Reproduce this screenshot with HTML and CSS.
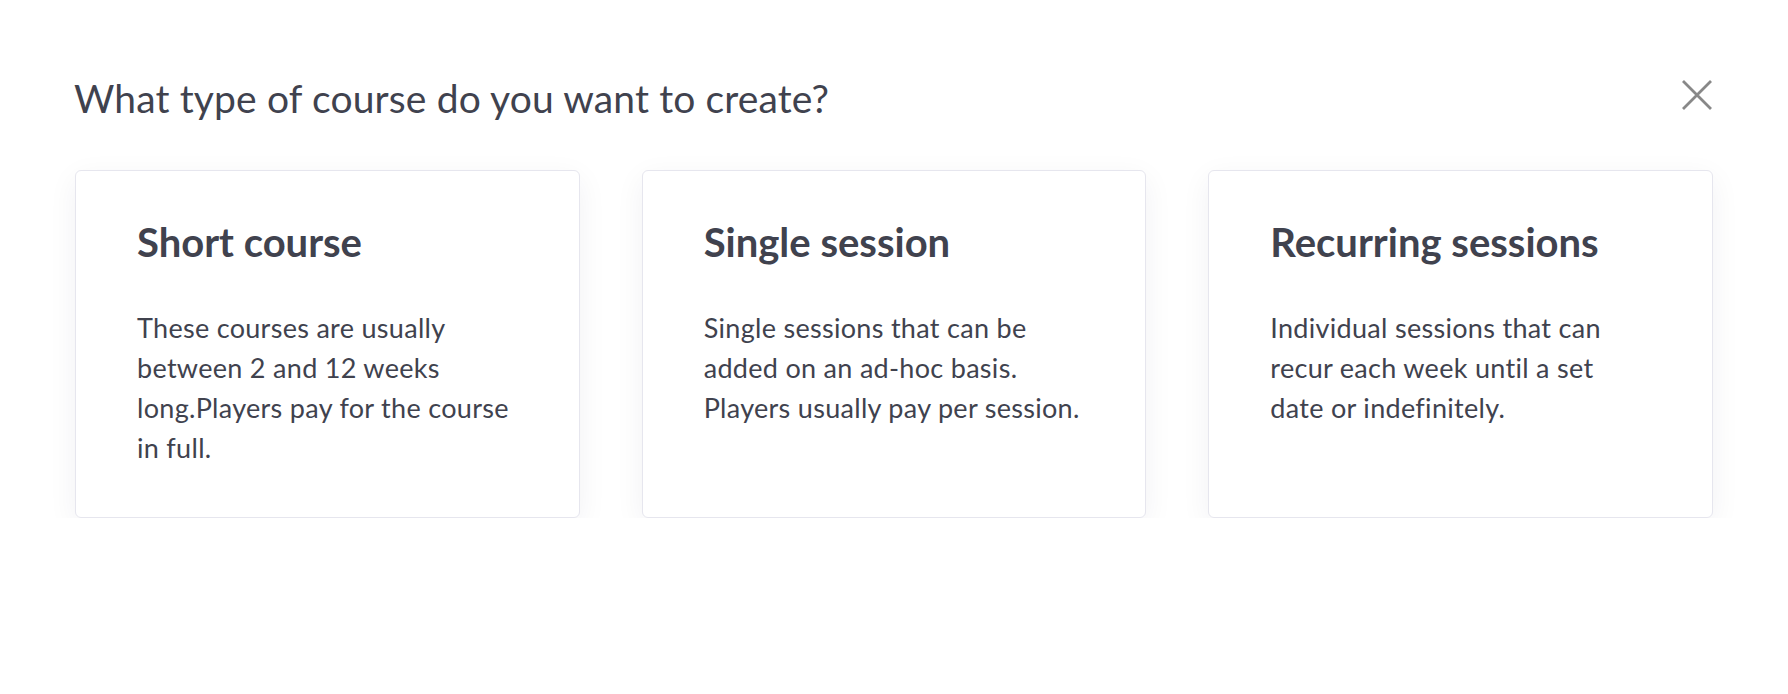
FILE: index.html
```html
<!DOCTYPE html>
<html lang="en">
<head>
<meta charset="utf-8">
<title>Create course</title>
<link rel="stylesheet" href="styles.css">
</head>
<body>
<div class="modal">
  <div class="modal-header">
    <h1 class="modal-title">What type of course do you want to create?</h1>
    <button class="close-btn" aria-label="Close">
      <svg viewBox="0 0 32 32" width="32" height="32"><path d="M2 2 L30 30 M30 2 L2 30" stroke="#888888" stroke-width="2.8" fill="none"/></svg>
    </button>
  </div>
  <div class="options">
    <div class="option-card">
      <h2 class="option-title">Short course</h2>
      <p class="option-desc">These courses are usually between 2 and 12 weeks long.Players pay for the course in full.</p>
    </div>
    <div class="option-card">
      <h2 class="option-title">Single session</h2>
      <p class="option-desc">Single sessions that can be added on an ad-hoc basis. Players usually pay per session.</p>
    </div>
    <div class="option-card">
      <h2 class="option-title">Recurring sessions</h2>
      <p class="option-desc">Individual sessions that can recur each week until a set date or indefinitely.</p>
    </div>
  </div>
</div>
</body>
</html>
```
FILE: styles.css
```css
html, body {
  margin: 0;
  padding: 0;
  background: #ffffff;
}
body {
  font-family: Lato, "Open Sans", sans-serif;
  color: #40424e;
}
.modal {
  padding: 75px 75px 0 74px;
}
.modal-header {
  display: flex;
  justify-content: space-between;
  align-items: center;
}
.modal-title {
  margin: 0;
  font-size: 39px;
  letter-spacing: 0.14px;
  font-weight: 400;
  line-height: 46px;
  color: #40424e;
}
.close-btn {
  border: 0;
  background: transparent;
  padding: 0;
  width: 32px;
  height: 32px;
  margin-top: -6px;
  margin-right: 0;
  cursor: pointer;
  display: flex;
}
.options {
  display: grid;
  grid-template-columns: repeat(3, 1fr);
  column-gap: 62px;
  margin-top: 49px;
  margin-left: 1px;
}
.option-card {
  background: #ffffff;
  border: 1px solid #e6e6ee;
  border-radius: 6px;
  box-shadow: 0 8px 30px rgba(30, 30, 60, 0.06);
  padding: 47px 62px 49px 61px;
}
.option-title {
  margin: 0;
  font-size: 40px;
  font-weight: 700;
  line-height: 48px;
  color: #40424e;
}
.option-desc {
  margin: 42px 0 0 0;
  font-size: 27px;
  letter-spacing: 0.3px;
  line-height: 40px;
  color: #40424e;
}
```
